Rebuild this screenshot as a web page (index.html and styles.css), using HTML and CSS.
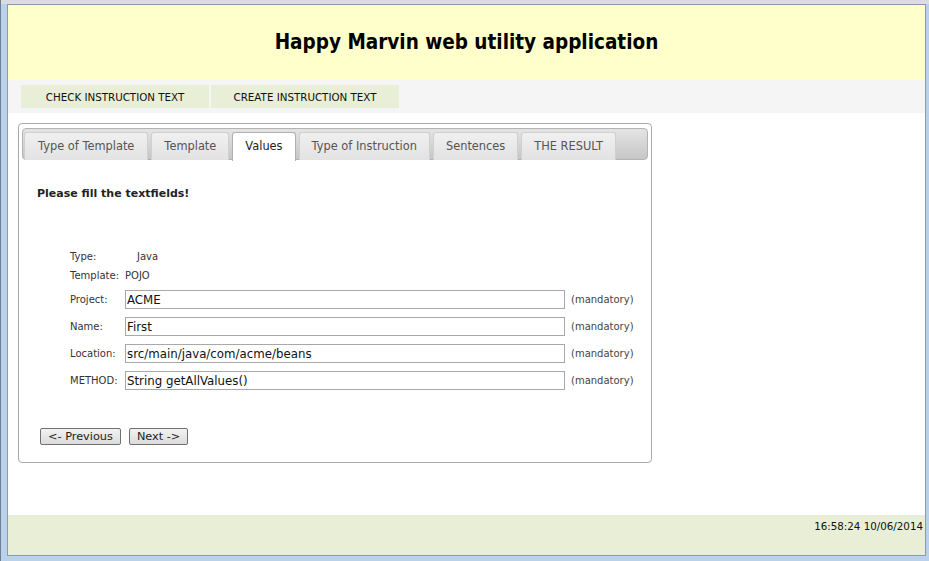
FILE: index.html
```html
<!DOCTYPE html>
<html>
<head>
<meta charset="utf-8">
<title>Happy Marvin</title>
<link rel="stylesheet" href="styles.css">
</head>
<body>
<div class="window">
  <div class="page">
    <header class="header">
      <h1 class="title">Happy Marvin web utility application</h1>
    </header>
    <nav class="menu">
      <a class="menu-item">CHECK INSTRUCTION TEXT</a>
      <a class="menu-item">CREATE INSTRUCTION TEXT</a>
    </nav>
    <main class="main">
      <section class="panel">
        <ul class="tabs">
          <li class="tab">Type of Template</li>
          <li class="tab">Template</li>
          <li class="tab active">Values</li>
          <li class="tab">Type of Instruction</li>
          <li class="tab">Sentences</li>
          <li class="tab">THE RESULT</li>
        </ul>
        <div class="panel-body">
          <h2 class="prompt">Please fill the textfields!</h2>
          <div class="form">
            <div class="info-row"><span class="label short">Type:</span><span class="info-val">Java</span></div>
            <div class="info-row"><span class="label">Template:</span><span class="info-val">POJO</span></div>
            <div class="fields">
              <div class="field-row"><span class="label">Project:</span><input class="input" value="ACME"><span class="note">(mandatory)</span></div>
              <div class="field-row"><span class="label">Name:</span><input class="input" value="First"><span class="note">(mandatory)</span></div>
              <div class="field-row"><span class="label">Location:</span><input class="input" value="src/main/java/com/acme/beans"><span class="note">(mandatory)</span></div>
              <div class="field-row"><span class="label">METHOD:</span><input class="input" value="String getAllValues()"><span class="note">(mandatory)</span></div>
            </div>
          </div>
          <div class="actions">
            <button class="btn">&lt;- Previous</button>
            <button class="btn">Next -&gt;</button>
          </div>
        </div>
      </section>
    </main>
    <footer class="footer">16:58:24 10/06/2014</footer>
  </div>
</div>
</body>
</html>
```

FILE: styles.css
```css
html, body {
  margin: 0;
  padding: 0;
  height: 100%;
}
body {
  background: #b7cfe9;
  font-family: "DejaVu Sans", Verdana, sans-serif;
  color: #222;
}
.window {
  height: 561px;
  box-sizing: border-box;
  padding: 4px 3px 5px 6px;
  background: linear-gradient(to bottom, #dcdcdc 0, #dcdcdc 4px, #b9d1ea 4px);
  border-left: 1px solid #6d7f93;
}
.page {
  height: 100%;
  box-sizing: border-box;
  border: 1px solid #8a9aab;
  background: #fff;
  display: flex;
  flex-direction: column;
}
.header {
  background: #ffffcc;
  height: 75px;
  display: flex;
  align-items: center;
  justify-content: center;
}
.title {
  margin: 0;
  font-family: "DejaVu Sans Condensed", "DejaVu Sans", sans-serif;
  font-weight: bold;
  font-size: 20.5px;
  color: #000;
  padding-bottom: 1px;
}
.menu {
  background: #f5f5f5;
  height: 33px;
  display: flex;
  gap: 2px;
  padding: 5px 0 0 13px;
  box-sizing: border-box;
}
.menu-item {
  width: 188px;
  height: 23px;
  background: #e9eed6;
  display: flex;
  align-items: center;
  justify-content: center;
  font-size: 10.3px;
  color: #111;
}
.main {
  flex: 1;
  padding: 10px 0 0 10px;
}
.panel {
  width: 634px;
  height: 340px;
  border: 1px solid #a9a9a9;
  border-radius: 4px;
  padding: 4px 3px;
  box-sizing: border-box;
}
.tabs {
  list-style: none;
  margin: 0;
  padding: 3px 0 0 1px;
  height: 32px;
  box-sizing: border-box;
  display: flex;
  gap: 3px;
  border: 1px solid #b3b3b3;
  border-radius: 4px;
  background: linear-gradient(to bottom, #e4e4e4, #c6c6c6);
}
.tab {
  height: 28px;
  padding: 0 12px 2px;
  box-sizing: border-box;
  display: flex;
  align-items: center;
  font-size: 11.4px;
  color: #555;
  background: linear-gradient(to bottom, #f0f0f0, #e2e2e2);
  border: 1px solid #d0d0d0;
  border-bottom: none;
  border-radius: 3px 3px 0 0;
}
.tab:first-child {
  padding: 0 13px 2px;
}
.tab.active {
  background: #fff;
  color: #222;
  border-color: #b0b0b0;
  height: 29px;
}
.panel-body {
  padding: 27px 0 0 15px;
}
.prompt {
  margin: 0;
  font-size: 11px;
  font-weight: bold;
  color: #222;
}
.form {
  padding: 47px 0 0 33px;
}
.label {
  display: inline-block;
  width: 55px;
  font-size: 10px;
  color: #333;
}
.info-row {
  height: 19px;
  display: flex;
  align-items: center;
  font-size: 10px;
}
.info-row .label { width: 55px; }
.info-row .label.short { width: 67px; }
.info-val { color: #333; font-size: 10px; }
.fields {
  padding-top: 1px;
}
.field-row {
  display: flex;
  align-items: center;
  height: 27px;
}
.input {
  width: 440px;
  height: 19px;
  box-sizing: border-box;
  border: 1px solid #a8a8a8;
  padding: 0 1px;
  font-family: "DejaVu Sans", sans-serif;
  font-size: 11.8px;
  color: #111;
  margin-right: 6px;
}
.note {
  font-size: 10px;
  color: #444;
}
.actions {
  display: flex;
  gap: 8px;
  padding: 34px 0 0 3px;
}
.btn {
  height: 17px;
  padding: 0 7px;
  font-family: "DejaVu Sans", sans-serif;
  font-size: 11.3px;
  color: #222;
  border: 1px solid #707070;
  border-radius: 2px;
  background: linear-gradient(to bottom, #f2f2f2, #dcdcdc);
}
.footer {
  margin-top: auto;
  height: 40px;
  background: #e9efd6;
  text-align: right;
  font-size: 10.3px;
  padding: 5px 2px 0 0;
  box-sizing: border-box;
  color: #111;
}
```
